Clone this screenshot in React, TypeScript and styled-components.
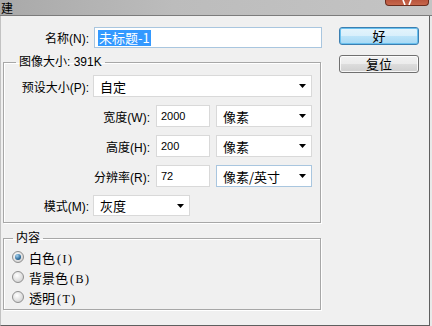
import React from 'react'
import styled, { createGlobalStyle } from 'styled-components'

const colors = {
  face: '#f0f0f0',
  etch: '#a7a7a7',
  field: '#d9d9d9',
  focus: '#a9c6df',
  select: '#3399ff'
}

const GlobalStyle = createGlobalStyle`
  html, body {
    margin: 0;
    padding: 0;
    background: #e9e9e9;
    overflow: hidden;
  }
  body {
    font-family: "Liberation Sans", "Noto Sans CJK SC", sans-serif;
    font-size: 12px;
    color: #000;
  }
`

const Window = styled.div`
  width: 432px;
  height: 326px;
  display: flex;
  flex-direction: column;
`

const TitleBar = styled.div`
  height: 15px;
  flex: none;
  display: flex;
  align-items: center;
  background: linear-gradient(90deg, #a9a9a9, #bcbcbc 40%, #c4c4c4);
  border-bottom: 1px solid #7c7c7c;
  overflow: hidden;
`

const Title = styled.span`
  margin-left: 1px;
  font-size: 12px;
  line-height: 14px;
  font-family: "Noto Sans CJK SC", sans-serif;
`

const CloseButton = styled.div`
  margin-left: auto;
  margin-right: 3px;
  align-self: flex-start;
  width: 44px;
  height: 6px;
  box-sizing: border-box;
  border: 1px solid #6a2c1d;
  border-top: none;
  border-radius: 0 0 4px 4px;
  background: linear-gradient(#b9553d, #c7674c);
  display: flex;
  justify-content: center;
`

const Body = styled.div`
  flex: 1;
  width: 430px;
  box-sizing: border-box;
  display: flex;
  padding: 11px 0 0 2px;
  background: ${colors.face};
  border-left: 1px solid #c2c2c2;
  border-right: 1px solid #5f5f5f;
  border-bottom: 1px solid #5f5f5f;
`

const MainColumn = styled.div`
  width: 319px;
  display: flex;
  flex-direction: column;
`

const SideColumn = styled.div`
  margin-left: 17px;
  display: flex;
  flex-direction: column;
  gap: 10px;
`

const Row = styled.div<{ $gap?: number; $height?: number }>`
  display: flex;
  align-items: center;
  gap: ${p => p.$gap ?? 4}px;
  height: ${p => p.$height ?? 22}px;
`

const Spacer = styled.div`
  height: 8px;
`

const Label = styled.span<{ $width: number }>`
  width: ${p => p.$width}px;
  flex: none;
  text-align: right;
  font-size: 12px;
  white-space: nowrap;
`

const Field = styled.div<{ $width: number; $focus?: boolean; $height?: number }>`
  width: ${p => p.$width}px;
  height: ${p => p.$height ?? 22}px;
  flex: none;
  box-sizing: border-box;
  display: flex;
  align-items: center;
  padding: 0 5px 0 3px;
  background: #fff;
  border: 1px solid ${p => (p.$focus ? colors.focus : colors.field)};
`

const Value = styled.span`
  font-size: 11px;
  padding-left: 1px;
`

const Selected = styled.span`
  background: ${colors.select};
  color: #fff;
  font-size: 13px;
  line-height: 16px;
  padding: 0 1px;
  font-family: "Noto Sans CJK SC", sans-serif;
`

const Choice = styled.span`
  flex: 1;
  font-size: 13px;
  padding-left: 3px;
  font-family: "Noto Sans CJK SC", sans-serif;
`

const Group = styled.fieldset<{ $top: number; $bottom: number; $gapAbove: number }>`
  margin: ${p => p.$gapAbove}px 0 0 0;
  width: 318px;
  min-width: 0;
  box-sizing: border-box;
  padding: ${p => p.$top}px 0 ${p => p.$bottom}px 0;
  border: 1px solid ${colors.etch};
  box-shadow: inset 1px 1px 0 #fff, 1px 1px 0 #fff;
  display: flex;
  flex-direction: column;
`

const Legend = styled.legend<{ $indent: number }>`
  margin-left: ${p => p.$indent}px;
  padding: 0 3px;
  font-size: 12px;
  line-height: 14px;
`

const Button = styled.button<{ $primary?: boolean }>`
  width: 80px;
  height: 18px;
  padding: 0;
  font-family: "Noto Sans CJK SC", sans-serif;
  font-size: 13px;
  line-height: 14px;
  color: #000;
  border-radius: 3px;
  border: 1px solid ${p => (p.$primary ? '#3c7fb1' : '#707070')};
  background: ${p =>
    p.$primary
      ? 'linear-gradient(#e5f4fc, #d8effb 50%, #bde4f9 50%, #a7d9f5)'
      : 'linear-gradient(#f2f2f2, #ebebeb 50%, #dddddd 50%, #cfcfcf)'};
  box-shadow: ${p =>
    p.$primary ? 'inset 0 0 0 1px #69c0ee' : 'inset 0 0 0 1px rgba(255,255,255,0.8)'};
`

const RadioRow = styled.label`
  display: flex;
  align-items: center;
  height: 20px;
  padding-left: 8px;
  gap: 5px;
  font-size: 13px;
  font-family: "Noto Sans CJK SC", sans-serif;
`

const RadioDot = styled.span<{ $checked?: boolean }>`
  width: 12px;
  height: 12px;
  box-sizing: border-box;
  border-radius: 50%;
  border: 1px solid #8f8f8f;
  background: radial-gradient(circle at 40% 35%, #ffffff, #d8d8d8 70%, #c4c4c4);
  display: flex;
  align-items: center;
  justify-content: center;
  &::after {
    content: '';
    display: ${p => (p.$checked ? 'block' : 'none')};
    width: 6px;
    height: 6px;
    border-radius: 50%;
    background: radial-gradient(circle at 35% 30%, #a6d3f0, #2f6d9c 60%, #16405f);
  }
`

const Mnemonic = styled.span`
  font-family: "Liberation Serif", serif;
  font-size: 12px;
  letter-spacing: 1.5px;
  margin-left: 2px;
`

const Arrow = () => (
  <svg width="7" height="4" viewBox="0 0 7 4">
    <polygon points="0,0 7,0 3.5,4" fill="#000" />
  </svg>
)

const Select: React.FC<{ width: number; value: string; focus?: boolean; height?: number }> = ({
  width,
  value,
  focus,
  height
}) => (
  <Field $width={width} $focus={focus} $height={height}>
    <Choice>{value}</Choice>
    <Arrow />
  </Field>
)

const DimensionRow: React.FC<{ label: string; value: string; unit: string; focus?: boolean }> = ({
  label,
  value,
  unit,
  focus
}) => (
  <Row $gap={6}>
    <Label $width={146}>{label}</Label>
    <Field $width={54}>
      <Value>{value}</Value>
    </Field>
    <Select width={96} value={unit} focus={focus} />
  </Row>
)

const Radio: React.FC<{ label: string; hotkey: string; checked?: boolean }> = ({
  label,
  hotkey,
  checked
}) => (
  <RadioRow>
    <RadioDot $checked={checked} />
    <span>
      {label}
      <Mnemonic>({hotkey})</Mnemonic>
    </span>
  </RadioRow>
)

const App: React.FC = () => (
  <Window>
    <GlobalStyle />
    <TitleBar>
      <Title>建</Title>
      <CloseButton>
        <svg width="14" height="5" viewBox="0 0 14 5">
          <path d="M3 0 L5 5 M11 0 L9 5" stroke="#fff" strokeWidth="1.6" />
        </svg>
      </CloseButton>
    </TitleBar>
    <Body>
      <MainColumn>
        <Row $gap={5} $height={21}>
          <Label $width={86}>名称(N):</Label>
          <Field $width={228} $height={21} $focus>
            <Selected>未标题-1</Selected>
          </Field>
        </Row>
        <Group $top={6} $bottom={6} $gapAbove={7}>
          <Legend $indent={12}>图像大小: 391K</Legend>
          <Row>
            <Label $width={85}>预设大小(P):</Label>
            <Select width={219} value="自定" />
          </Row>
          <Spacer />
          <DimensionRow label="宽度(W):" value="2000" unit="像素" />
          <Spacer />
          <DimensionRow label="高度(H):" value="200" unit="像素" />
          <Spacer />
          <DimensionRow label="分辨率(R):" value="72" unit="像素/英寸" focus />
          <Spacer />
          <Row $height={21}>
            <Label $width={85}>模式(M):</Label>
            <Select width={97} height={21} value="灰度" />
          </Row>
        </Group>
        <Group $top={2} $bottom={2} $gapAbove={8}>
          <Legend $indent={9}>内容</Legend>
          <Radio label="白色" hotkey="I" checked />
          <Radio label="背景色" hotkey="B" />
          <Radio label="透明" hotkey="T" />
        </Group>
      </MainColumn>
      <SideColumn>
        <Button $primary>好</Button>
        <Button>复位</Button>
      </SideColumn>
    </Body>
  </Window>
)

export default App
